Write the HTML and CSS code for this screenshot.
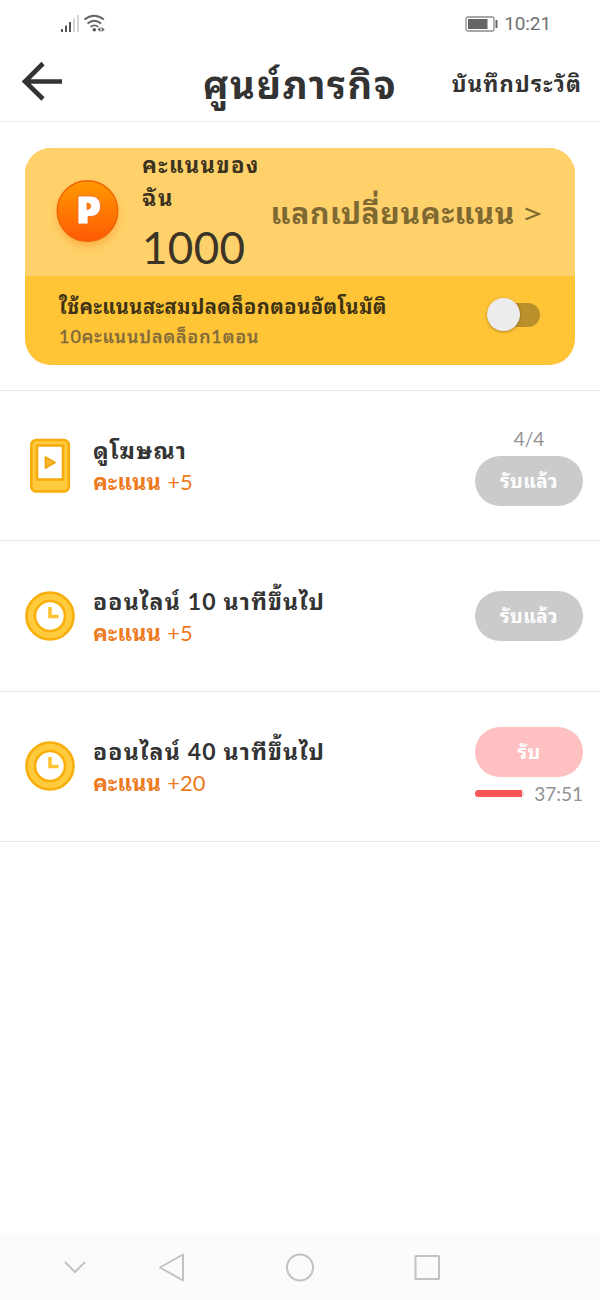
FILE: index.html
```html
<!DOCTYPE html>
<html lang="th">
<head>
<meta charset="utf-8">
<title>ศูนย์ภารกิจ</title>
<link rel="stylesheet" href="styles.css">
</head>
<body>
<div class="screen">
  <div class="status">
    <svg class="status-left" width="48" height="20" viewBox="0 0 48 20">
      <g fill="#555"><rect x="1" y="15" width="2" height="3"/><rect x="5" y="11.500" width="2" height="6.500"/><rect x="9" y="8" width="2" height="10"/></g>
      <g fill="#d4d4d4"><rect x="13" y="4.500" width="2" height="13.500"/><rect x="17" y="1" width="2" height="17"/></g>
      <g fill="none" stroke="#666" stroke-width="1.800"><path d="M24.500 5.500Q34-2 44 5.500"/><path d="M27.500 9.500Q34.300 4 41.200 9.500"/><path d="M30.500 13Q34.300 9.800 38.200 13"/></g>
      <circle cx="34.300" cy="15.700" r="1.800" fill="#555"/>
      <path d="M40.500 13v5l-3-2.500zM41.700 13v5l3-2.500z" fill="#666"/>
    </svg>
    <div class="status-right">
      <svg width="34" height="18" viewBox="0 0 34 18"><rect x="1" y="2" width="28" height="14" rx="2" fill="#fff" stroke="#8a8a8a" stroke-width="1.300"/><rect x="3" y="4" width="19.500" height="10" fill="#666"/><rect x="30.500" y="5" width="2" height="8" fill="#666"/></svg>
      <span class="clock">10:21</span>
    </div>
  </div>
  <header class="header">
    <svg class="back" width="42" height="42" viewBox="0 0 42 42"><path d="M41 21.500H5M22 3.500 4 21.500 22 39" fill="none" stroke="#333" stroke-width="4.600"/></svg>
    <h1 class="title"><span class="t">ศูนย์ภารกิจ</span></h1>
    <span class="history"><span class="t">บันทึกประวัติ</span></span>
  </header>
  <section class="card">
    <div class="card-top">
      <svg class="coin" width="82" height="86" viewBox="0 0 82 86">
        <defs><linearGradient id="coin" x1="0" y1="0" x2="0" y2="1"><stop offset="0" stop-color="#ff9a00"/><stop offset="1" stop-color="#ff5a05"/></linearGradient><filter id="glow" x="-30%" y="-30%" width="160%" height="160%"><feGaussianBlur stdDeviation="4"/></filter></defs>
        <circle cx="41.500" cy="47" r="30" fill="#f98a1c" opacity=".5" filter="url(#glow)"/>
        <circle cx="41.500" cy="42" r="30.300" fill="url(#coin)" stroke="#ef6508" stroke-width="1.400"/>
        <path fill="#fff" stroke="#f4651a" stroke-width=".8" fill-rule="evenodd" d="M32 27H44C51 27 54.500 31 54.500 37S51 47.500 44 47.500H42V55H32ZM41 34V40.500C46 40.500 46 34 41 34Z"/>
      </svg>
      <div class="points">
        <div class="points-label"><span class="t">คะแนนของ</span></div>
        <div class="points-label second"><span class="t">ฉัน</span></div>
        <div class="points-value">1000</div>
      </div>
      <div class="exchange"><span class="t">แลกเปลี่ยนคะแนน</span><svg width="17" height="17" viewBox="0 0 17 17"><path d="M1.500 5.500 15 11 1.500 16.500" fill="none" stroke="#7f6933" stroke-width="2"/></svg></div>
    </div>
    <div class="card-bottom">
      <div class="auto">
        <div class="auto-title"><span class="t">ใช้คะแนนสะสมปลดล็อกตอนอัตโนมัติ</span></div>
        <div class="auto-sub"><span class="t">10คะแนนปลดล็อก1ตอน</span></div>
      </div>
      <div class="toggle"><div class="knob"></div></div>
    </div>
  </section>
  <main class="tasks">
    <article class="task">
      <svg class="icon" width="50" height="56" viewBox="0 0 50 56"><rect x="6.300" y="2" width="37.500" height="51.500" rx="5" fill="#ffcb3d" stroke="#f7ac0c" stroke-width="2.600"/><rect x="12" y="7.500" width="26" height="34" fill="#fff" stroke="#f7ac0c" stroke-width="2.600"/><path d="M20.500 19v11L30 24.500z" fill="#f8b72c" stroke="#f0a410" stroke-width="1.800" stroke-linejoin="round"/></svg>
      <div class="info"><div class="name"><span class="t n1">ดูโฆษณา</span></div><div class="reward"><span class="t">คะแนน</span><span class="plus">+5</span></div></div>
      <div class="action ad"><span class="count">4/4</span><div class="btn"><span class="t">รับแล้ว</span></div></div>
    </article>
    <article class="task">
      <svg class="icon" width="50" height="50" viewBox="0 0 50 50"><circle cx="25" cy="25" r="23.500" fill="#ffcb3d" stroke="#f9ae0b" stroke-width="2.600"/><circle cx="25" cy="25" r="15" fill="#fff" stroke="#f9ae0b" stroke-width="2.600"/><path d="M25 16v9.500h8.500" fill="none" stroke="#ffc233" stroke-width="3.500"/></svg>
      <div class="info"><div class="name"><span class="t n2">ออนไลน์ 10 นาทีขึ้นไป</span></div><div class="reward"><span class="t">คะแนน</span><span class="plus">+5</span></div></div>
      <div class="action"><div class="btn"><span class="t">รับแล้ว</span></div></div>
    </article>
    <article class="task">
      <svg class="icon" width="50" height="50" viewBox="0 0 50 50"><circle cx="25" cy="25" r="23.500" fill="#ffcb3d" stroke="#f9ae0b" stroke-width="2.600"/><circle cx="25" cy="25" r="15" fill="#fff" stroke="#f9ae0b" stroke-width="2.600"/><path d="M25 16v9.500h8.500" fill="none" stroke="#ffc233" stroke-width="3.500"/></svg>
      <div class="info"><div class="name"><span class="t n2">ออนไลน์ 40 นาทีขึ้นไป</span></div><div class="reward"><span class="t">คะแนน</span><span class="plus">+20</span></div></div>
      <div class="action timed"><div class="btn pink"><span class="t">รับ</span></div><div class="timer"><div class="bar"><div class="fill"></div></div><span class="time">37:51</span></div></div>
    </article>
  </main>
  <nav class="nav">
    <svg width="600" height="66" viewBox="0 0 600 66" fill="none" stroke="#c2c2c2" stroke-width="2"><path d="M65 28 75 38 85 28"/><path d="M183 20.500V46.500L160 33.500Z" stroke-linejoin="round"/><circle cx="300" cy="33.500" r="13"/><rect x="415.500" y="22" width="23.500" height="23" rx=".5"/></svg>
  </nav>
</div>
</body>
</html>
```
FILE: styles.css
```css
* { box-sizing: border-box; }
body { margin: 0; background: #fff; color: #333; font-family: Lato, "Noto Sans Thai Looped", "Noto Looped Thai", "Loma", "Noto Serif Thai", "Waree", "Garuda", "Umpush", "Noto Sans", sans-serif; }
svg { display: block; flex: none; }
.t { white-space: nowrap; }
.screen { width: 600px; height: 1300px; display: flex; flex-direction: column; overflow: hidden; }
.status { height: 46px; padding: 0 49px 0 60px; display: flex; justify-content: space-between; align-items: center; }
.status-left { margin-top: 1px; }
.status-right { display: flex; align-items: center; gap: 5px; padding-top: 2px; font: 19px/24px Roboto, sans-serif; color: #707070; letter-spacing: -.1px; }
.header { height: 76px; flex: none; border-bottom: 1px solid #ededed; display: grid; grid-template-columns: 180px 240px 161px; align-items: center; }
.back { margin: -5px 0 0 21px; }
.title { margin: 0; font-size: 38px; line-height: 50px; text-align: center; letter-spacing: 1.6px; }
.history { font-size: 22px; font-weight: 700; line-height: 30px; text-align: right; letter-spacing: 1.2px; margin: 1px -1px 0 0; }
.card { width: 550px; height: 217px; margin: 25.5px 0 0 25px; flex: none; border-radius: 26px; overflow: hidden; background: #ffc537; }
.card-top { height: 128px; background: #ffd16a; display: flex; align-items: center; padding: 0 34px 0 21px; }
.points { width: 117px; height: 128px; margin-left: 14px; display: flex; flex-direction: column; }
.points-label { height: 33px; font-weight: 700; font-size: 22px; line-height: 33px; letter-spacing: 1.5px; color: #3b3220; }
.points-value { font-size: 44px; line-height: 60px; letter-spacing: .3px; color: #3b3427; margin-top: 3px; }
.exchange { margin-left: auto; display: flex; align-items: center; gap: 9px; font-size: 30px; font-weight: 700; line-height: 40px; letter-spacing: .6px; color: #7f6933; }
.card-bottom { height: 89px; display: flex; justify-content: space-between; padding: 14px 35px 0 34px; }
.auto-title { font-size: 20px; font-weight: 700; line-height: 32px; letter-spacing: .5px; color: #3d3214; }
.auto-sub { font-size: 18px; font-weight: 500; line-height: 29px; letter-spacing: .95px; color: #80693b; -webkit-text-stroke: .3px #80693b; }
.toggle { width: 52px; height: 24px; border-radius: 12px; background: #ba902b; margin-top: 13px; display: flex; align-items: center; }
.knob { width: 33px; height: 33px; margin-left: -1px; flex: none; border-radius: 50%; background: #ececec; box-shadow: 0 1px 3px rgba(80,50,0,.45); }
.tasks { margin-top: 25.5px; border-top: 1px solid #e9e9e9; }
.task { height: 150.4px; border-bottom: 1px solid #e9e9e9; display: flex; align-items: center; padding: 0 17px 0 25px; }
.info { margin-left: 18px; flex: 1; }
.name { font-size: 23px; font-weight: 700; line-height: 32px; letter-spacing: 1.2px; }
.reward { display: flex; align-items: center; gap: 6px; font-size: 22px; line-height: 31px; font-weight: 700; color: #ed7a1d; }
.reward .t { letter-spacing: .25px; }
.plus { font-weight: 400; }
.action { width: 108px; display: flex; flex-direction: column; align-items: center; }
.count { font-size: 19px; line-height: 24px; margin: 1px 0 5px; color: #929292; }
.btn { width: 108px; height: 50px; border-radius: 25px; background: #cbcbcb; color: #fff; font-size: 19px; font-weight: 700; line-height: 50px; letter-spacing: .5px; text-align: center; }
.pink { background: #ffc0c2; }
.timer { width: 108px; height: 28px; padding-top: 5px; display: flex; align-items: center; justify-content: space-between; }
.bar { width: 49px; height: 7px; border-radius: 4px; background: #ddd; overflow: hidden; }
.fill { width: 47px; height: 7px; background: #fb5558; }
.time { font-size: 19px; color: #929292; line-height: 26px; }
.nav { height: 66px; margin-top: auto; flex: none; background: #fbfbfb; }
```
